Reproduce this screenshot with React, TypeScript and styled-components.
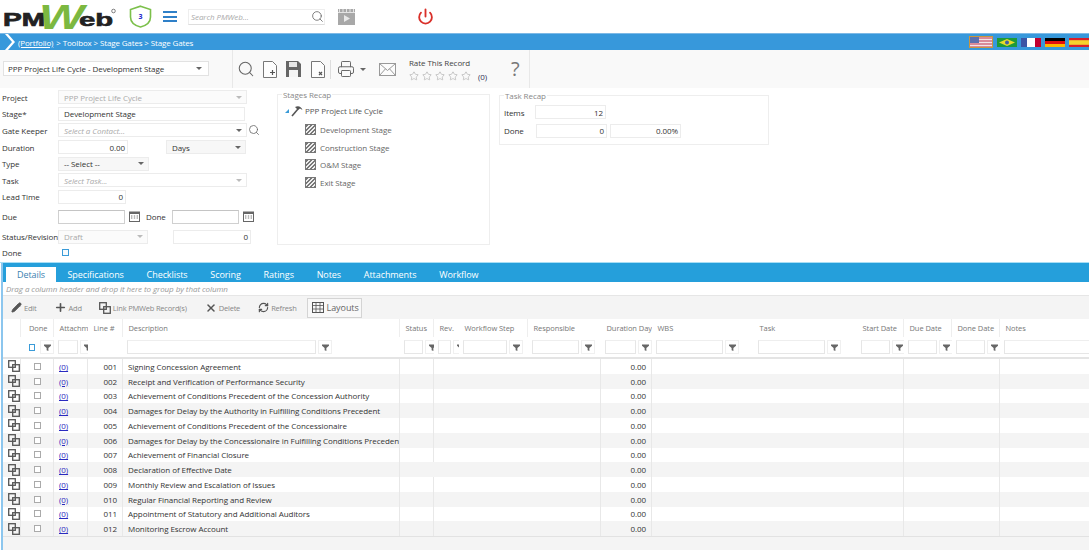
import React from "react";
import styled, { createGlobalStyle } from "styled-components";
import { Power, Search, Star, Pencil, Plus, X, RefreshCw, Printer } from "lucide-react";

const GlobalStyle = createGlobalStyle`
  html, body { margin: 0; padding: 0; background: #fff; }
  body { font-family: "Open Sans", "Liberation Sans", sans-serif; font-size: 8px; letter-spacing: -0.07px; color: #333; }
  * { box-sizing: border-box; }
`;

const Page = styled.div`
  width: 1089px;
  height: 550px;
  overflow: hidden;
  display: flex;
  flex-direction: column;
`;

/* top header */
const Header = styled.div`
  height: 33px;
  display: flex;
  align-items: center;
  background: #fff;
`;
const Logo = styled.svg`
  width: 115px;
  height: 33px;
  margin-left: 2px;
  flex: none;
`;
const Shield = styled.div`
  position: relative;
  width: 23px;
  height: 23px;
  margin-left: 12px;
  display: flex;
  align-items: center;
  justify-content: center;
  font-size: 7px;
  font-weight: 700;
  color: #2222cc;
  svg { position: absolute; inset: 0; }
  span { position: relative; }
`;
const Burger = styled.div`
  width: 14px;
  height: 11px;
  margin-left: 11px;
  display: flex;
  flex-direction: column;
  justify-content: space-between;
  i { display: block; height: 2px; background: #2f80c8; }
`;
const SearchBox = styled.div`
  width: 137px;
  height: 16px;
  margin-left: 11px;
  border: 1px solid #eee;
  border-bottom-color: #ddd;
  display: flex;
  align-items: center;
  justify-content: space-between;
  padding-left: 2px;
  font-style: italic;
  color: #aaa;
`;
const VideoIcon = styled.svg`
  width: 17px;
  height: 16px;
  margin-left: 13px;
`;
const PowerWrap = styled.div`
  margin-left: 62px;
  display: flex;
  color: #d9302a;
`;

/* breadcrumb */
const Crumbs = styled.div`
  height: 17px;
  background: #3798db;
  border-top: 1px solid #7db9e6;
  display: flex;
  align-items: center;
  color: #fff;
  letter-spacing: -0.14px;
`;
const CrumbArrow = styled.svg`
  width: 14px;
  height: 16px;
  margin-left: 3px;
  margin-right: 1px;
`;
const CrumbLink = styled.span`
  text-decoration: underline;
  margin-right: 3px;
`;
const Flags = styled.div`
  margin-left: auto;
  display: flex;
  align-items: center;
  gap: 4px;
`;
const FlagBox = styled.svg<{ $active?: boolean }>`
  width: ${(p) => (p.$active ? 24 : 20)}px;
  height: ${(p) => (p.$active ? 12 : 9)}px;
  ${(p) => p.$active && "outline: 1px solid #c8963e; outline-offset: -1px;"}
  display: block;
`;

/* record toolbar */
const RecordBar = styled.div`
  height: 38px;
  background: #f9f9f9;
  display: flex;
`;
const RecordLeft = styled.div`
  width: 233px;
  border-right: 1px solid #e8e8e8;
  padding: 11px 0 0 3px;
`;
const RecordSelect = styled.div`
  width: 206px;
  height: 15px;
  background: #fff;
  border: 1px solid #e2e2e2;
  display: flex;
  align-items: center;
  justify-content: space-between;
  padding: 0 4px 0 4px;
  color: #333;
`;
const RecordTools = styled.div`
  width: 297px;
  border-right: 1px solid #e8e8e8;
  display: flex;
  align-items: center;
  color: #666;
`;
const ToolIcon = styled.div<{ $left: number }>`
  margin-left: ${(p) => p.$left}px;
  display: flex;
`;
const ToolDivider = styled.div`
  width: 1px;
  height: 19px;
  background: #ddd;
  margin-left: 5px;
`;
const Rate = styled.div`
  margin-left: 13px;
  width: 82px;
  display: flex;
  flex-direction: column;
  gap: 3px;
  color: #444;
`;
const Stars = styled.div`
  display: flex;
  align-items: center;
  gap: 3px;
  color: #888;
`;
const RateCount = styled.span`
  margin-left: 4px;
  color: #335;
`;
const QuestionMark = styled.span`
  font-size: 20px;
  line-height: 20px;
  color: #777;
`;

/* form */
const FormArea = styled.div`
  height: 175px;
  display: flex;
  border-bottom: 1px solid #a8def5;
  background: #fff;
`;
const FormCol = styled.div`
  width: 277px;
  padding: 1px 0 0 2px;
  display: flex;
  flex-direction: column;
`;
const FormRow = styled.div<{ $h?: number }>`
  height: ${(p) => p.$h ?? 16.6}px;
  display: flex;
  align-items: center;
  flex: none;
`;
const Label = styled.label<{ $w?: number; $left?: number }>`
  width: ${(p) => p.$w ?? 56}px;
  margin-left: ${(p) => p.$left ?? 0}px;
  flex: none;
  color: #333;
  white-space: nowrap;
`;
const Field = styled.div<{ $w: number; $left?: number; $disabled?: boolean; $right?: boolean; $strong?: boolean; $shaded?: boolean }>`
  width: ${(p) => p.$w}px;
  height: 14px;
  flex: none;
  margin-left: ${(p) => p.$left ?? 0}px;
  padding: 0 2px 0 5px;
  border: 1px solid #ececec;
  ${(p) => p.$strong && "border-color: #d0d0d0; border-top-color: #c4c4c4;"}
  display: flex;
  align-items: center;
  justify-content: ${(p) => (p.$right ? "flex-end" : "space-between")};
  color: ${(p) => (p.$disabled ? "#aaa" : "#333")};
  background: ${(p) => (p.$shaded ? "#f7f7f7" : p.$disabled ? "#fbfbfb" : "#fff")};
  white-space: nowrap;
`;
const Hint = styled.span`
  font-style: italic;
  color: #aaa;
`;
const Caret = styled.i<{ $dim?: boolean }>`
  display: block;
  width: 0;
  height: 0;
  margin-right: 2px;
  flex: none;
  border-left: 3px solid transparent;
  border-right: 3px solid transparent;
  border-top: 3px solid ${(p) => (p.$dim ? "#bbb" : "#666")};
`;
const LookupIcon = styled.div`
  display: flex;
  margin-left: 1px;
  color: #666;
`;
const CalIcon = styled.svg`
  width: 11px;
  height: 11px;
  margin-left: 4px;
  flex: none;
`;
const DoneCheck = styled.div`
  width: 7px;
  height: 7px;
  margin-left: 4px;
  border: 1px solid #3a9bd8;
  background: #f6fbfe;
`;
const Recap = styled.fieldset<{ $w: number; $h: number; $left: number; $top: number }>`
  width: ${(p) => p.$w}px;
  height: ${(p) => p.$h}px;
  margin: ${(p) => p.$top}px 0 0 ${(p) => p.$left}px;
  padding: 0;
  border: 1px solid #eee;
  min-inline-size: 0;
  flex: none;
  legend {
    margin-left: 4px;
    padding: 0 1px;
    color: #888;
    line-height: 9px;
  }
`;
const TreeRoot = styled.div`
  display: flex;
  align-items: center;
  gap: 2px;
  padding: 1px 0 0 7px;
  height: 22px;
  color: #555;
`;
const TreeArrow = styled.i`
  display: block;
  width: 0;
  height: 0;
  border-bottom: 4px solid #3a9bd8;
  border-left: 4px solid transparent;
`;
const TreeItem = styled.div`
  display: flex;
  align-items: center;
  gap: 4px;
  height: 17.6px;
  padding-left: 27px;
  color: #666;
`;
const Hatch = styled.i`
  display: block;
  width: 11px;
  height: 11px;
  border: 1px solid #777;
  background: repeating-linear-gradient(135deg, #777 0 1.5px, #eee 1.5px 3px);
`;
const RecapRow = styled.div`
  display: flex;
  align-items: center;
  height: 18.5px;
  padding-left: 4px;
  color: #555;
  &:first-of-type { margin-top: 3px; }
`;

/* tabs */
const Section = styled.div`
  flex: 1;
  min-height: 0;
  display: flex;
  flex-direction: column;
  border-left: 2px solid #8cc6ee;
  margin-left: 1px;
  background: #f4f4f4;
`;
const Tabs = styled.div`
  height: 19px;
  flex: none;
  background: #259fdb;
  display: flex;
  align-items: flex-end;
  padding-left: 3px;
`;
const Tab = styled.div<{ $active?: boolean }>`
  height: 15px;
  padding: 0 11.4px;
  display: flex;
  align-items: center;
  font-size: 9px;
  color: ${(p) => (p.$active ? "#3b7fb0" : "#fff")};
  background: ${(p) => (p.$active ? "#fff" : "transparent")};
  ${(p) => p.$active && "width: 50px; justify-content: center;"}
`;
const GroupHint = styled.div`
  height: 14px;
  flex: none;
  background: #fff;
  border-bottom: 1px solid #e6e6e6;
  padding-left: 3px;
  display: flex;
  align-items: center;
  font-style: italic;
  color: #999;
`;
const GridBar = styled.div`
  height: 23px;
  flex: none;
  background: #f4f4f4;
  display: flex;
  align-items: center;
`;
const GridAction = styled.div<{ $left: number }>`
  display: flex;
  align-items: center;
  gap: 2px;
  margin-left: ${(p) => p.$left}px;
  font-size: 7.5px;
  letter-spacing: -0.2px;
  color: #888;
  svg { color: #555; flex: none; }
`;
const LayoutsButton = styled.div`
  width: 55px;
  height: 20px;
  margin-left: 10px;
  background: #f8f8f8;
  border: 1px solid #d4d4d4;
  display: flex;
  align-items: center;
  gap: 3px;
  padding-left: 4px;
  font-size: 9px;
  color: #666;
`;

/* grid */
const columns = [
  { key: "open", title: "", w: 18 },
  { key: "done", title: "Done", w: 33, center: true },
  { key: "att", title: "Attachments", w: 34, input: 20 },
  { key: "line", title: "Line #", w: 35 },
  { key: "desc", title: "Description", w: 277, input: 189 },
  { key: "status", title: "Status", w: 34, input: 19 },
  { key: "rev", title: "Rev.", w: 25, input: 13 },
  { key: "step", title: "Workflow Step", w: 69, input: 44 },
  { key: "resp", title: "Responsible", w: 73, input: 47 },
  { key: "dur", title: "Duration Days", w: 51, input: 31, right: true },
  { key: "wbs", title: "WBS", w: 102, input: 67 },
  { key: "task", title: "Task", w: 103, input: 67 },
  { key: "start", title: "Start Date", w: 47, input: 29 },
  { key: "due", title: "Due Date", w: 48, input: 29 },
  { key: "doneDate", title: "Done Date", w: 48, input: 29 },
  { key: "notes", title: "Notes", w: 93, input: 120 },
];
const gridTemplate = columns.map((c) => `${c.w}px`).join(" ");

const rows = [
  ["001", "Signing Concession Agreement"],
  ["002", "Receipt and Verification of Performance Security"],
  ["003", "Achievement of Conditions Precedent of the Concession Authority"],
  ["004", "Damages for Delay by the Authority in Fulfilling Conditions Precedent"],
  ["005", "Achievement of Conditions Precedent of the Concessionaire"],
  ["006", "Damages for Delay by the Concessionaire in Fulfilling Conditions Precedent"],
  ["007", "Achievement of Financial Closure"],
  ["008", "Declaration of Effective Date"],
  ["009", "Monthly Review and Escalation of Issues"],
  ["010", "Regular Financial Reporting and Review"],
  ["011", "Appointment of Statutory and Additional Auditors"],
  ["012", "Monitoring Escrow Account"],
];

const HeadRow = styled.div`
  height: 18px;
  flex: none;
  background: #fff;
  display: grid;
  grid-template-columns: ${gridTemplate};
`;
const HeadCell = styled.div<{ $center?: boolean; $bordered?: boolean }>`
  padding: 0 0 0 ${(p) => (p.$center ? 8 : 5.5)}px;
  display: flex;
  align-items: center;
  overflow: hidden;
  white-space: nowrap;
  color: #777;
  font-size: 7.5px;
  ${(p) => p.$bordered && "border-right: 1px solid #eee;"}
`;
const FilterRow = styled.div`
  height: 22px;
  flex: none;
  background: #fff;
  border-bottom: 2px solid #e4e4e4;
  display: grid;
  grid-template-columns: ${gridTemplate};
`;
const FilterCell = styled.div<{ $center?: boolean }>`
  display: flex;
  align-items: center;
  gap: 2px;
  padding-left: ${(p) => (p.$center ? 8 : 4)}px;
  overflow: hidden;
`;
const FilterInput = styled.div<{ $w: number }>`
  width: ${(p) => p.$w}px;
  height: 14px;
  flex: none;
  border: 1px solid #e6e6e6;
  border-top-color: #eee;
`;
const FilterCheck = styled.div`
  width: 6px;
  height: 7px;
  flex: none;
  border: 1px solid #3a9bd8;
  margin-right: 3px;
`;
const FilterBtn = styled.div`
  width: 14px;
  height: 14px;
  flex: none;
  border: 1px solid #f0f0f0;
  display: flex;
  align-items: center;
  justify-content: center;
`;
const Funnel = styled.svg`
  width: 7px;
  height: 7px;
  display: block;
`;
const Body = styled.div`
  flex: none;
  border-bottom: 1px solid #e2e2e2;
`;
const Row = styled.div<{ $alt: boolean }>`
  height: 14.75px;
  display: grid;
  grid-template-columns: ${gridTemplate};
  background: ${(p) => (p.$alt ? "#f4f4f4" : "#fff")};
`;
const Cell = styled.div<{ $right?: boolean; $center?: boolean; $plain?: boolean; $open?: boolean }>`
  display: flex;
  align-items: center;
  justify-content: ${(p) => (p.$right ? "flex-end" : p.$center ? "center" : "flex-start")};
  padding: 0 ${(p) => (p.$right ? 5 : 0)}px 0 ${(p) => (p.$open ? 5 : p.$right || p.$center ? 0 : 5)}px;
  ${(p) => !p.$plain && "border-right: 1px solid #e8e8e8;"}
  overflow: hidden;
  white-space: nowrap;
  color: #333;
`;
const RowCheck = styled.div`
  width: 7px;
  height: 7px;
  border: 1px solid #aaa;
  background: #fff;
`;
const CountLink = styled.span`
  color: #2a2ac0;
  text-decoration: underline;
`;
const CopyIcon = styled.svg`
  width: 12px;
  height: 12px;
  display: block;
`;

const FunnelGlyph = () => (
  <Funnel viewBox="0 0 8 8">
    <path d="M0 0.5h8v1.4L5 4.6V8L3 7V4.6L0 1.9z" fill="#666" />
  </Funnel>
);

const Copy = () => (
  <CopyIcon viewBox="0 0 12 12">
    <g fill="none" stroke="#555" strokeWidth="1.3">
      <rect x="0.7" y="0.7" width="6.6" height="6.6" />
      <rect x="4.7" y="4.7" width="6.6" height="6.6" />
    </g>
  </CopyIcon>
);

const Calendar = () => (
  <CalIcon viewBox="0 0 11 11">
    <rect x="0.5" y="1" width="10" height="9.5" fill="#fff" stroke="#666" />
    <rect x="0.5" y="1" width="10" height="2" fill="#666" />
    <path d="M2 5h1.4M4.8 5h1.4M7.6 5h1.4M2 7h1.4M4.8 7h1.4M7.6 7h1.4" stroke="#777" />
  </CalIcon>
);

const Doc = ({ mark }: { mark: "plus" | "x" }) => (
  <svg width="14" height="17" viewBox="0 0 14 17">
    <path d="M0.5 0.5h9l4 4v12h-13z" fill="#fdfdfd" stroke="#777" />
    {mark === "plus" ? (
      <path d="M7 11.5h5M9.5 9v5" stroke="#555" strokeWidth="1.2" />
    ) : (
      <path d="M8 11l3 3M11 11l-3 3" stroke="#555" strokeWidth="1.2" />
    )}
  </svg>
);

const Floppy = () => (
  <svg width="15" height="16" viewBox="0 0 15 16">
    <path d="M0 0h12l3 3v13H0z" fill="#666" />
    <rect x="3" y="1" width="8" height="5" fill="#e6e6e6" />
    <rect x="3" y="9" width="9" height="7" fill="#f4f4f4" />
  </svg>
);

const Envelope = () => (
  <svg width="17" height="13" viewBox="0 0 17 13">
    <rect x="0.5" y="0.5" width="16" height="12" fill="#fcfcfc" stroke="#999" />
    <path d="M0.500 0.500 8.500 7.500 16.500 0.500M0.500 12.500 6.500 5.800M16.500 12.500 10.500 5.800" fill="none" stroke="#999" />
  </svg>
);

const Flag = ({ kind }: { kind: string }) => {
  if (kind === "us") {
    return (
      <FlagBox $active viewBox="0 0 24 12">
        <rect width="24" height="12" fill="#d98a98" />
        <path d="M0 3.5h24M0 6.5h24M0 9.5h24" stroke="#f3e3e6" />
        <rect x="1" y="1" width="9" height="6" fill="#5b70ae" />
      </FlagBox>
    );
  }
  if (kind === "br") {
    return (
      <FlagBox viewBox="0 0 20 9">
        <rect width="20" height="9" fill="#1d9a3a" />
        <path d="M10 1l8 3.5L10 8 2 4.5z" fill="#e8da2a" />
        <circle cx="10" cy="4.5" r="2" fill="#3f5fa8" />
      </FlagBox>
    );
  }
  if (kind === "fr") {
    return (
      <FlagBox viewBox="0 0 20 9">
        <rect width="7" height="9" fill="#3c55a5" />
        <rect x="6" width="8" height="9" fill="#fff" />
        <rect x="14" width="6" height="9" fill="#c1002f" />
      </FlagBox>
    );
  }
  if (kind === "de") {
    return (
      <FlagBox viewBox="0 0 20 9">
        <rect width="20" height="3" fill="#000" />
        <rect y="3" width="20" height="3" fill="#e0100f" />
        <rect y="6" width="20" height="3" fill="#fdb800" />
      </FlagBox>
    );
  }
  return (
    <FlagBox viewBox="0 0 20 9">
      <rect width="20" height="9" fill="#d8202a" />
      <rect y="2.2" width="20" height="4.6" fill="#f6d32d" />
    </FlagBox>
  );
};

export default function App() {
  return (
    <Page>
      <GlobalStyle />
      <Header>
        <Logo viewBox="0 0 115 33">
          <text x="1" y="26" fontFamily="Liberation Sans" fontWeight="700" fontSize="19" fill="#222" stroke="#222" strokeWidth="0.7" textLength="42" lengthAdjust="spacingAndGlyphs">PM</text>
          <text x="37" y="29" fontFamily="Liberation Sans" fontWeight="700" fontStyle="italic" fontSize="35" fill="#7cb840" textLength="45" lengthAdjust="spacingAndGlyphs">W</text>
          <text x="77" y="26" fontFamily="Liberation Sans" fontWeight="700" fontSize="19" fill="#222" stroke="#222" strokeWidth="0.6" textLength="34" lengthAdjust="spacingAndGlyphs">eb</text>
          <circle cx="111.5" cy="11" r="1.8" fill="none" stroke="#333" strokeWidth="0.6" />
        </Logo>
        <Shield>
          <svg width="23" height="23" viewBox="0 0 23 23">
            <path d="M11.5 1.2 21.5 4.5V12c0 5-4 8.500-10 10C5.500 20.500 1.500 17 1.500 12V4.500z" fill="#fff" stroke="#7cc04b" strokeWidth="1.6" />
          </svg>
          <span>3</span>
        </Shield>
        <Burger><i /><i /><i /></Burger>
        <SearchBox>
          Search PMWeb...
          <Search size={13} color="#666" strokeWidth={1.5} />
        </SearchBox>
        <VideoIcon viewBox="0 0 17 16">
          <rect width="17" height="16" fill="#a8a8a8" />
          <path d="M0 3.500h17M1.500 0v3.500M5 0v3.500M8.500 0v3.500M12 0v3.500M15.500 0v3.500" stroke="#e4e4e4" />
          <path d="M6 6l6 3.500L6 13z" fill="#e8e8e8" />
        </VideoIcon>
        <PowerWrap><Power size={17} strokeWidth={2.6} /></PowerWrap>
      </Header>

      <Crumbs>
        <CrumbArrow viewBox="0 0 14 16">
          <path d="M2 0l7 8-7 8h3l7-8-7-8z" fill="#fff" />
        </CrumbArrow>
        <CrumbLink>(Portfolio)</CrumbLink>&gt; Toolbox &gt; Stage Gates &gt; Stage Gates
        <Flags>
          <Flag kind="us" />
          <Flag kind="br" />
          <Flag kind="fr" />
          <Flag kind="de" />
          <Flag kind="es" />
        </Flags>
      </Crumbs>

      <RecordBar>
        <RecordLeft>
          <RecordSelect>
            PPP Project Life Cycle - Development Stage
            <Caret />
          </RecordSelect>
        </RecordLeft>
        <RecordTools>
          <ToolIcon $left={4}><Search size={18} strokeWidth={1.4} /></ToolIcon>
          <ToolIcon $left={8}><Doc mark="plus" /></ToolIcon>
          <ToolIcon $left={9}><Floppy /></ToolIcon>
          <ToolIcon $left={10}><Doc mark="x" /></ToolIcon>
          <ToolDivider />
          <ToolIcon $left={6}><Printer size={18} strokeWidth={1.3} /></ToolIcon>
          <ToolIcon $left={5}><Caret /></ToolIcon>
          <ToolIcon $left={11}><Envelope /></ToolIcon>
          <Rate>
            Rate This Record
            <Stars>
              <Star size={10} strokeWidth={1} />
              <Star size={10} strokeWidth={1} />
              <Star size={10} strokeWidth={1} />
              <Star size={10} strokeWidth={1} />
              <Star size={10} strokeWidth={1} />
              <RateCount>(0)</RateCount>
            </Stars>
          </Rate>
          <ToolIcon $left={20}><QuestionMark>?</QuestionMark></ToolIcon>
        </RecordTools>
      </RecordBar>

      <FormArea>
        <FormCol>
          <FormRow>
            <Label>Project</Label>
            <Field $w={189} $disabled>PPP Project Life Cycle<Caret $dim /></Field>
          </FormRow>
          <FormRow>
            <Label>Stage*</Label>
            <Field $w={187}>Development Stage</Field>
          </FormRow>
          <FormRow>
            <Label>Gate Keeper</Label>
            <Field $w={189}><Hint>Select a Contact...</Hint><Caret /></Field>
            <LookupIcon><Search size={12} strokeWidth={1.6} /></LookupIcon>
          </FormRow>
          <FormRow>
            <Label>Duration</Label>
            <Field $w={70} $right>0.00</Field>
            <Field $w={80} $left={38} $shaded>Days<Caret /></Field>
          </FormRow>
          <FormRow>
            <Label>Type</Label>
            <Field $w={91} $shaded>-- Select --<Caret /></Field>
          </FormRow>
          <FormRow>
            <Label>Task</Label>
            <Field $w={189}><Hint>Select Task...</Hint><Caret $dim /></Field>
          </FormRow>
          <FormRow>
            <Label>Lead Time</Label>
            <Field $w={68} $right>0</Field>
          </FormRow>
          <FormRow $h={23}>
            <Label>Due</Label>
            <Field $w={67} $strong />
            <Calendar />
            <Label $w={26} $left={6}>Done</Label>
            <Field $w={67} $strong />
            <Calendar />
          </FormRow>
          <FormRow $h={17}>
            <Label>Status/Revision</Label>
            <Field $w={90} $disabled>Draft<Caret $dim /></Field>
            <Field $w={78} $left={25} $right>0</Field>
          </FormRow>
          <FormRow $h={15}>
            <Label>Done</Label>
            <DoneCheck />
          </FormRow>
        </FormCol>
        <Recap $w={213} $h={155} $left={0} $top={2}>
          <legend>Stages Recap</legend>
          <TreeRoot>
            <TreeArrow />
            <svg width="12" height="12" viewBox="0 0 12 12">
              <path d="M1 11 7 4" stroke="#555" strokeWidth="1.6" />
              <path d="M4 2c3-1.500 6-1 7.500 3L9 3.500 7 5z" fill="#555" />
            </svg>
            PPP Project Life Cycle
          </TreeRoot>
          <TreeItem><Hatch />Development Stage</TreeItem>
          <TreeItem><Hatch />Construction Stage</TreeItem>
          <TreeItem><Hatch />O&amp;M Stage</TreeItem>
          <TreeItem><Hatch />Exit Stage</TreeItem>
        </Recap>
        <Recap $w={270} $h={54} $left={9} $top={3}>
          <legend>Task Recap</legend>
          <RecapRow>
            <Label $w={31}>Items</Label>
            <Field $w={71} $right>12</Field>
          </RecapRow>
          <RecapRow>
            <Label $w={32}>Done</Label>
            <Field $w={71} $right>0</Field>
            <Field $w={71} $left={3} $right>0.00%</Field>
          </RecapRow>
        </Recap>
      </FormArea>

      <Section>
        <Tabs>
          <Tab $active>Details</Tab>
          <Tab>Specifications</Tab>
          <Tab>Checklists</Tab>
          <Tab>Scoring</Tab>
          <Tab>Ratings</Tab>
          <Tab>Notes</Tab>
          <Tab>Attachments</Tab>
          <Tab>Workflow</Tab>
        </Tabs>
        <GroupHint>Drag a column header and drop it here to group by that column</GroupHint>
        <GridBar>
          <GridAction $left={8}><Pencil size={11} fill="#555" />Edit</GridAction>
          <GridAction $left={17}><Plus size={13} strokeWidth={3} />Add</GridAction>
          <GridAction $left={17}><Copy />Link PMWeb Record(s)</GridAction>
          <GridAction $left={18}><X size={12} strokeWidth={3} />Delete</GridAction>
          <GridAction $left={18}><RefreshCw size={11} strokeWidth={2.6} />Refresh</GridAction>
          <LayoutsButton>
            <svg width="12" height="11" viewBox="0 0 12 11">
              <rect x="0.500" y="0.500" width="11" height="10" fill="none" stroke="#555" />
              <path d="M0 3.500h12M0 7h12M4 0v11M8 0v11" stroke="#555" strokeWidth="0.8" />
            </svg>
            Layouts
          </LayoutsButton>
        </GridBar>
        <HeadRow>
          {columns.map((c) => (
            <HeadCell key={c.key} $center={c.center} $bordered={["open", "done", "line", "desc", "status", "step", "start", "due", "doneDate"].includes(c.key)}>
              {c.title}
            </HeadCell>
          ))}
        </HeadRow>
        <FilterRow>
          {columns.map((c) => (
            <FilterCell key={c.key} $center={c.center}>
              {c.key === "done" && <FilterCheck />}
              {c.input && <FilterInput $w={c.input} />}
              {(c.input || c.key === "done") && <FilterBtn><FunnelGlyph /></FilterBtn>}
            </FilterCell>
          ))}
        </FilterRow>
        <Body>
          {rows.map(([line, desc], i) => (
            <Row key={line} $alt={i % 2 === 1}>
              <Cell $center $open><Copy /></Cell>
              <Cell $center><RowCheck /></Cell>
              <Cell><CountLink>(0)</CountLink></Cell>
              <Cell $right>{line}</Cell>
              <Cell>{desc}</Cell>
              <Cell $plain={line === "008"} />
              <Cell $plain />
              <Cell $plain />
              <Cell />
              <Cell $right>0.00</Cell>
              <Cell $plain />
              <Cell $plain />
              <Cell />
              <Cell $plain />
              <Cell />
              <Cell $plain />
            </Row>
          ))}
        </Body>
      </Section>
    </Page>
  );
}
